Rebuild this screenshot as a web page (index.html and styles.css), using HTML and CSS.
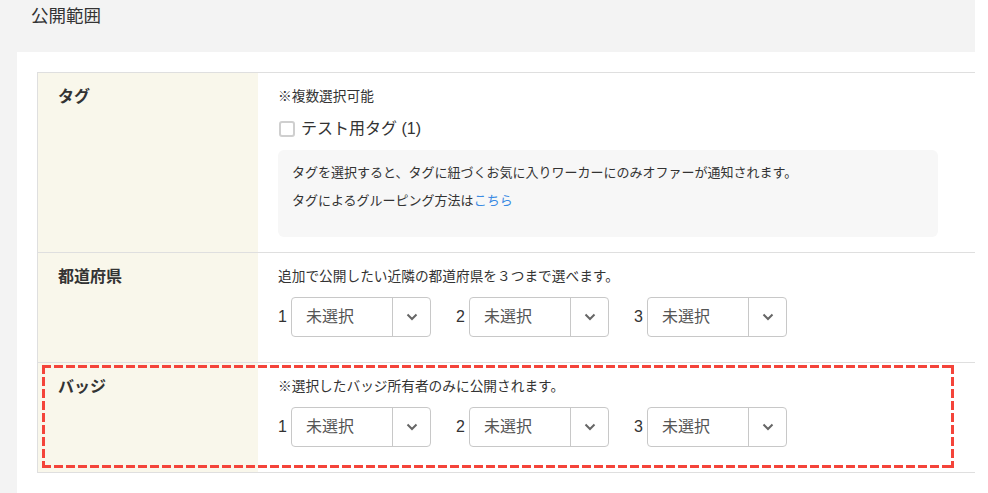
FILE: index.html
```html
<!DOCTYPE html>
<html lang="ja">
<head>
<meta charset="utf-8">
<link rel="stylesheet" href="styles.css">
</head>
<body>
<div class="page">
  <div class="header">公開範囲</div>
  <div class="panel">
    <div class="table">
      <div class="row">
        <div class="label">タグ</div>
        <div class="cell">
          <div class="note">※複数選択可能</div>
          <label class="check"><span class="box"></span><span>テスト用タグ (1)</span></label>
          <div class="info">
            <p>タグを選択すると、タグに紐づくお気に入りワーカーにのみオファーが通知されます。</p>
            <p>タグによるグルーピング方法は<a href="#">こちら</a></p>
          </div>
        </div>
      </div>
      <div class="row">
        <div class="label">都道府県</div>
        <div class="cell">
          <div class="note">追加で公開したい近隣の都道府県を３つまで選べます。</div>
          <div class="selects">
            <div class="sel"><span class="num">1</span><div class="select"><span class="val">未選択</span><span class="arrow"><svg width="12" height="8" viewBox="0 0 12 8"><path d="M1.5 1.5 L6 6 L10.5 1.5" fill="none" stroke="#666" stroke-width="2"/></svg></span></div></div>
            <div class="sel"><span class="num">2</span><div class="select"><span class="val">未選択</span><span class="arrow"><svg width="12" height="8" viewBox="0 0 12 8"><path d="M1.5 1.5 L6 6 L10.5 1.5" fill="none" stroke="#666" stroke-width="2"/></svg></span></div></div>
            <div class="sel"><span class="num">3</span><div class="select"><span class="val">未選択</span><span class="arrow"><svg width="12" height="8" viewBox="0 0 12 8"><path d="M1.5 1.5 L6 6 L10.5 1.5" fill="none" stroke="#666" stroke-width="2"/></svg></span></div></div>
          </div>
        </div>
      </div>
      <div class="row highlight">
        <div class="label">バッジ</div>
        <div class="cell">
          <div class="note">※選択したバッジ所有者のみに公開されます。</div>
          <div class="selects">
            <div class="sel"><span class="num">1</span><div class="select"><span class="val">未選択</span><span class="arrow"><svg width="12" height="8" viewBox="0 0 12 8"><path d="M1.5 1.5 L6 6 L10.5 1.5" fill="none" stroke="#666" stroke-width="2"/></svg></span></div></div>
            <div class="sel"><span class="num">2</span><div class="select"><span class="val">未選択</span><span class="arrow"><svg width="12" height="8" viewBox="0 0 12 8"><path d="M1.5 1.5 L6 6 L10.5 1.5" fill="none" stroke="#666" stroke-width="2"/></svg></span></div></div>
            <div class="sel"><span class="num">3</span><div class="select"><span class="val">未選択</span><span class="arrow"><svg width="12" height="8" viewBox="0 0 12 8"><path d="M1.5 1.5 L6 6 L10.5 1.5" fill="none" stroke="#666" stroke-width="2"/></svg></span></div></div>
          </div>
        </div>
        <div class="dash"></div>
      </div>
    </div>
  </div>
</div>
</body>
</html>
```
FILE: styles.css
```css
* { box-sizing: border-box; }
html, body { margin: 0; padding: 0; background: #fff; }
body {
  width: 988px;
  height: 493px;
  overflow: hidden;
  font-family: "Liberation Sans", "Noto Sans CJK JP", sans-serif;
  color: #333;
}
.page {
  width: 975px;
  height: 493px;
  background: #f3f3f3;
  display: flex;
  flex-direction: column;
}
.header {
  height: 52px;
  padding: 5px 31px;
  font-size: 17.5px;
  line-height: 22px;
}
.panel {
  flex: 1;
  margin-left: 17px;
  background: #fff;
  padding: 20px 0 0 20px;
  overflow: hidden;
}
.table {
  border-top: 1px solid #dfdfdf;
  border-left: 1px solid #dfdfdf;
}
.row {
  display: grid;
  grid-template-columns: 220px 1fr;
  border-bottom: 1px solid #dfdfdf;
  position: relative;
}
.label {
  background: #f9f7eb;
  padding: 14px 20px;
  font-size: 16px;
  line-height: 20px;
  font-weight: bold;
}
.cell {
  padding: 14px 20px 25px 20px;
}
.note {
  font-size: 13.7px;
  line-height: 20px;
}
.check {
  display: flex;
  align-items: center;
  height: 24px;
  margin-top: 10px;
  font-size: 16px;
  line-height: 24px;
}
.check .box {
  width: 16px;
  height: 16px;
  border: 2px solid #cfcfcf;
  border-radius: 3px;
  margin: 0 6px 0 1px;
  background: #fff;
}
.info {
  width: 660px;
  margin-top: 9px;
  margin-bottom: -10px;
  background: #f7f7f7;
  border-radius: 6px;
  padding: 9px 14px 22px;
  font-size: 13px;
  line-height: 28px;
}
.info p { margin: 0; }
.info a { color: #3a8ae3; text-decoration: none; }
.selects {
  display: flex;
  gap: 25px;
  margin-top: 10px;
}
.sel {
  display: flex;
  align-items: center;
}
.num {
  width: 13px;
  font-size: 16px;
  color: #333;
}
.select {
  display: flex;
  width: 140px;
  height: 40px;
  border: 1px solid #c8c8c8;
  border-radius: 4px;
  background: #fff;
}
.val {
  width: 100px;
  padding-left: 14px;
  font-size: 16px;
  line-height: 38px;
  color: #555;
}
.arrow {
  flex: 1;
  border-left: 1px solid #c8c8c8;
  display: flex;
  align-items: center;
  justify-content: center;
}
.dash {
  position: absolute;
  top: 2px;
  left: 4px;
  right: 21px;
  bottom: 4px;
  pointer-events: none;
  background:
    repeating-linear-gradient(90deg, #f4443a 0 9px, transparent 9px 12px) left top / 100% 3px no-repeat,
    repeating-linear-gradient(90deg, #f4443a 0 9px, transparent 9px 12px) left bottom / 100% 3px no-repeat,
    repeating-linear-gradient(180deg, #f4443a 0 9px, transparent 9px 12px) left top / 3px 100% no-repeat,
    repeating-linear-gradient(180deg, #f4443a 0 9px, transparent 9px 12px) right top / 3px 100% no-repeat;
}
```
